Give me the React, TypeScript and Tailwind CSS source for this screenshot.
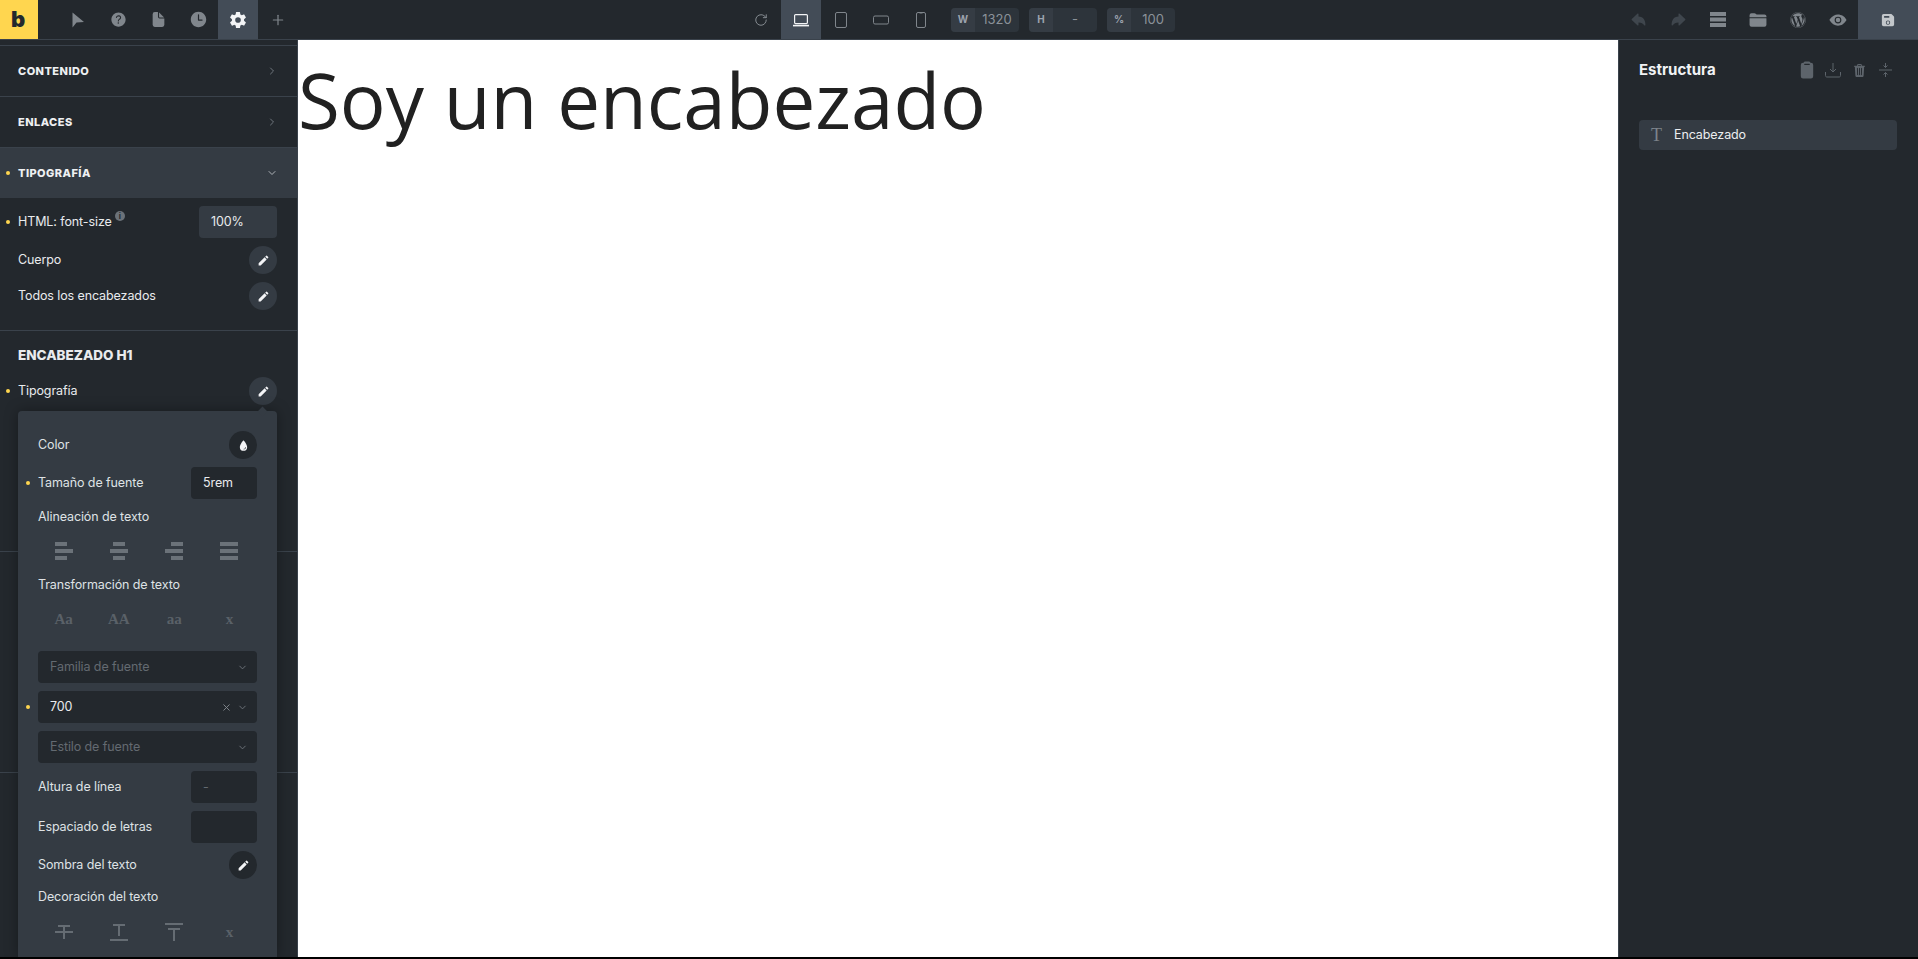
import { ReactNode } from 'react';
import { ChevronDown, ChevronRight, Plus, RotateCw, X } from 'lucide-react';
import {
  IoArrowRedo,
  IoArrowUndo,
  IoClipboard,
  IoDocument,
  IoEye,
  IoFolder,
  IoHelpCircle,
  IoSave,
  IoSettingsSharp,
  IoTime,
  IoTrash,
  IoWater,
} from 'react-icons/io5';
import { FaWordpress } from 'react-icons/fa';
import { MdEdit } from 'react-icons/md';

function Dot() {
  return <span className="absolute left-[6px] top-1/2 -mt-[2px] w-1 h-1 rounded-full bg-[#ffd64f]" />;
}

function ToolButton({ children, active, className }: { children: ReactNode; active?: boolean; className?: string }) {
  return (
    <div className={`w-10 h-full flex items-center justify-center ${active ? 'bg-[#434c57] text-[#f3f4f6]' : ''} ${className ?? ''}`}>
      {children}
    </div>
  );
}

function SizeField({ label, value }: { label: string; value: string }) {
  return (
    <div className="w-[68px] h-6 flex rounded-[4px] bg-[#2d343b] overflow-hidden text-[13px] text-[#8b9299]">
      <span className="w-6 flex items-center justify-center bg-[#353c44] text-[10px] font-bold text-[#9ca3af]">{label}</span>
      <span className="flex-1 flex items-center justify-center">{value}</span>
    </div>
  );
}

function TopBar() {
  return (
    <header className="h-10 shrink-0 flex items-stretch justify-between bg-[#23282d] border-b border-[#3a424b] text-[#80868c]">
      <div className="flex items-stretch">
        <div className="w-[38px] flex items-center justify-center bg-[#ffd64f] text-[#23282d] text-[22px] font-black leading-none pb-[2px] pr-[2px]">b</div>
        <div className="w-[20px]" />
        <ToolButton>
          <svg width="14" height="16" viewBox="0 0 14 16" fill="currentColor" className="ml-[-1px]">
            <path d="M1.5 0.5 L13 10 L5.5 10.5 L1.5 15.5 Z" />
          </svg>
        </ToolButton>
        <ToolButton><IoHelpCircle size={19} /></ToolButton>
        <ToolButton><IoDocument size={17} /></ToolButton>
        <ToolButton><IoTime size={19} /></ToolButton>
        <ToolButton active><IoSettingsSharp size={18} /></ToolButton>
        <ToolButton><Plus size={16} strokeWidth={1.8} /></ToolButton>
      </div>

      <div className="absolute left-[741px] top-0 h-[39px] flex items-stretch">
        <ToolButton className="text-[#8b9197]"><RotateCw size={14} strokeWidth={1.6} /></ToolButton>
        <ToolButton active>
          <svg width="18" height="14" viewBox="0 0 18 14" fill="none" stroke="currentColor" strokeWidth="1.2">
            <rect x="2.6" y="1.6" width="12.8" height="9" rx="1" />
            <path d="M1 12.6 H17" strokeWidth="1.6" />
          </svg>
        </ToolButton>
        <ToolButton>
          <svg width="12" height="16" viewBox="0 0 12 16" fill="none" stroke="currentColor" strokeWidth="1">
            <rect x="0.5" y="0.5" width="11" height="15" rx="1.5" />
          </svg>
        </ToolButton>
        <ToolButton>
          <svg width="16" height="10" viewBox="0 0 16 10" fill="none" stroke="currentColor" strokeWidth="1">
            <rect x="0.5" y="1" width="15" height="8" rx="1.5" />
          </svg>
        </ToolButton>
        <ToolButton>
          <svg width="10" height="16" viewBox="0 0 10 16" fill="none" stroke="currentColor" strokeWidth="1">
            <rect x="0.5" y="0.5" width="9" height="15" rx="1.5" />
            <path d="M3.5 1 H6.5" />
          </svg>
        </ToolButton>
        <div className="flex items-center gap-[10px] ml-[10px]">
          <SizeField label="W" value="1320" />
          <SizeField label="H" value="-" />
          <SizeField label="%" value="100" />
        </div>
      </div>

      <div className="flex items-stretch">
        <ToolButton className="text-[#3f464d]"><IoArrowUndo size={17} /></ToolButton>
        <ToolButton className="text-[#3f464d]"><IoArrowRedo size={17} /></ToolButton>
        <ToolButton>
          <svg width="16" height="15" viewBox="0 0 16 15" fill="currentColor">
            <rect width="16" height="4" />
            <rect y="5.5" width="16" height="4" />
            <rect y="11" width="16" height="4" />
          </svg>
        </ToolButton>
        <ToolButton><IoFolder size={18} /></ToolButton>
        <ToolButton><FaWordpress size={16} /></ToolButton>
        <ToolButton><IoEye size={18} /></ToolButton>
        <div className="w-[60px] flex items-center justify-center bg-[#434c57] text-[#c3c7cb]"><IoSave size={14} /></div>
      </div>
    </header>
  );
}

function AccordionRow({ label, open, marked }: { label: string; open?: boolean; marked?: boolean }) {
  return (
    <div className={`relative h-[51px] flex items-center justify-between pl-[18px] pr-[19px] border-t border-[#3a424b] ${open ? 'bg-[#343b43]' : ''}`}>
      {marked && <Dot />}
      <span className="text-[11px] font-extrabold tracking-[0.45px] text-[#eef0f2]">{label}</span>
      {open ? <ChevronDown size={12} className="text-[#aeb3b8]" /> : <ChevronRight size={12} className="text-[#6f767d]" />}
    </div>
  );
}

function EditButton({ dark }: { dark?: boolean }) {
  return (
    <span className={`w-7 h-7 rounded-full flex items-center justify-center text-[#f3f4f6] ${dark ? 'bg-[#23282d]' : 'bg-[#343b43]'}`}>
      <MdEdit size={13} />
    </span>
  );
}

function SideRow({ label, marked, children }: { label: ReactNode; marked?: boolean; children?: ReactNode }) {
  return (
    <div className="relative h-7 flex items-center justify-between pl-[18px] pr-[20px]">
      {marked && <Dot />}
      <span>{label}</span>
      {children}
    </div>
  );
}

function FieldBox({ children, className }: { children?: ReactNode; className?: string }) {
  return <span className={`h-8 rounded-[4px] flex items-center ${className ?? ''}`}>{children}</span>;
}

function SelectBox({ label, value, clearable }: { label?: string; value?: string; clearable?: boolean }) {
  return (
    <div className="h-8 rounded-[4px] bg-[#23282d] flex items-center pl-3 pr-[9px]">
      <span className={`flex-1 ${value ? 'text-[#e9ebed]' : 'text-[#636a71]'}`}>{value ?? label}</span>
      {clearable && <X size={11} className="text-[#858b91] mr-[5px]" />}
      <ChevronDown size={11} className="text-[#70767d]" />
    </div>
  );
}

function AlignIcon({ rows }: { rows: [number, number][] }) {
  return (
    <svg width="18" height="18" viewBox="0 0 18 18" fill="currentColor">
      {rows.map(([x, w], i) => (
        <rect key={i} x={x} y={i * 7} width={w} height="4" />
      ))}
    </svg>
  );
}

function TypographyPopover() {
  return (
    <div className="absolute left-[18px] top-[411px] w-[259px] h-[546px] z-10 rounded-t-[4px] bg-[#343b43] px-5 shadow-[0_0_14px_rgba(0,0,0,0.35)] text-[12.5px] tracking-[-0.1px] text-[#dfe2e5]">
      <span className="absolute right-[11px] -top-[3px] w-[7px] h-[7px] rotate-45 bg-[#343b43]" />

      <div className="h-7 mt-5 flex items-center justify-between">
        <span>Color</span>
        <span className="w-7 h-7 rounded-full bg-[#23282d] flex items-center justify-center text-[#f3f4f6]"><IoWater size={13} /></span>
      </div>

      <div className="relative h-8 mt-2 flex items-center justify-between">
        <span className="absolute -left-[12px] top-1/2 -mt-[2px] w-1 h-1 rounded-full bg-[#ffd64f]" />
        <span>Tamaño de fuente</span>
        <FieldBox className="w-[66px] bg-[#23282d] pl-3 text-[#e9ebed]">5rem</FieldBox>
      </div>

      <div className="h-5 mt-2 flex items-center">Alineación de texto</div>
      <div className="grid grid-cols-4 h-[18px] mt-[15px] -ml-[2px] justify-items-center text-[#6b7279]">
        <AlignIcon rows={[[0, 12], [0, 18], [0, 12]]} />
        <AlignIcon rows={[[3, 12], [0, 18], [3, 12]]} />
        <AlignIcon rows={[[6, 12], [0, 18], [6, 12]]} />
        <AlignIcon rows={[[0, 18], [0, 18], [0, 18]]} />
      </div>

      <div className="h-5 mt-[15px] flex items-center">Transformación de texto</div>
      <div className="grid grid-cols-4 h-6 mt-[12px] -ml-[2px] justify-items-center items-center font-['Liberation_Serif',serif] font-bold text-[#5a6168] text-[15px] tracking-normal">
        <span>Aa</span>
        <span>AA</span>
        <span>aa</span>
        <span>x</span>
      </div>

      <div className="flex flex-col gap-2 mt-[20px]">
        <SelectBox label="Familia de fuente" />
        <div className="relative">
          <span className="absolute -left-[12px] top-1/2 -mt-[2px] w-1 h-1 rounded-full bg-[#ffd64f]" />
          <SelectBox value="700" clearable />
        </div>
        <SelectBox label="Estilo de fuente" />
        <div className="flex items-center justify-between">
          <span>Altura de línea</span>
          <FieldBox className="w-[66px] bg-[#23282d] pl-3 text-[#636a71]">-</FieldBox>
        </div>
        <div className="flex items-center justify-between">
          <span>Espaciado de letras</span>
          <FieldBox className="w-[66px] bg-[#23282d]" />
        </div>
      </div>

      <div className="h-7 mt-2 flex items-center justify-between">
        <span>Sombra del texto</span>
        <EditButton dark />
      </div>

      <div className="h-5 mt-2 flex items-center">Decoración del texto</div>
      <div className="grid grid-cols-4 h-5 mt-[14px] -ml-[2px] justify-items-center items-center text-[#656c73]">
        <svg width="18" height="16" viewBox="0 0 18 16" fill="none" stroke="currentColor" strokeWidth="2">
          <path d="M3 2 H15 M0 8 H18 M9 2 V15" />
        </svg>
        <svg width="18" height="18" viewBox="0 0 18 18" fill="none" stroke="currentColor" strokeWidth="2">
          <path d="M3 2 H15 M9 2 V13 M0 17 H18" />
        </svg>
        <svg width="18" height="18" viewBox="0 0 18 18" fill="none" stroke="currentColor" strokeWidth="2">
          <path d="M0 1 H18 M3 6 H15 M9 6 V18" />
        </svg>
        <span className="font-['Liberation_Serif',serif] font-bold text-[15px] text-[#5a6168]">x</span>
      </div>
    </div>
  );
}

function LeftPanel() {
  return (
    <aside className="relative w-[298px] shrink-0 bg-[#23282d] border-r border-[#3a424b] pt-[5px] text-[12.5px] tracking-[-0.1px] text-[#e9ebed] overflow-hidden">
      <AccordionRow label="CONTENIDO" />
      <AccordionRow label="ENLACES" />
      <AccordionRow label="TIPOGRAFÍA" open marked />
      <div className="h-[132px] pt-2 flex flex-col gap-2">
        <div className="relative h-8 flex items-center justify-between pl-[18px] pr-[20px]">
          <Dot />
          <span className="flex items-start gap-[3px]">
            HTML: font-size
            <span className="mt-[-2px] w-[10px] h-[10px] rounded-full bg-[#6b7279] text-[8px] leading-[10px] text-center font-bold text-[#23282d]">i</span>
          </span>
          <FieldBox className="w-[78px] bg-[#343b43] pl-3">100%</FieldBox>
        </div>
        <SideRow label="Cuerpo"><EditButton /></SideRow>
        <SideRow label="Todos los encabezados"><EditButton /></SideRow>
      </div>
      <div className="h-[221px] border-t border-[#3a424b] pt-[14px]">
        <div className="pl-[18px] h-5 flex items-center text-[13.5px] font-extrabold tracking-normal text-[#e9ebed]">ENCABEZADO H1</div>
        <div className="mt-[12px]">
          <SideRow label="Tipografía" marked><EditButton /></SideRow>
        </div>
      </div>
      <div className="h-[221px] border-t border-[#3a424b]" />
      <div className="border-t border-[#3a424b]" />
    </aside>
  );
}

function StructurePanel() {
  return (
    <aside className="w-[300px] shrink-0 bg-[#23282d] border-l border-[#3a424b] pl-5 pr-[21px] pt-5 text-[12.5px] tracking-[-0.1px]">
      <div className="h-5 flex items-center justify-between">
        <span className="text-[15px] font-bold tracking-normal text-[#f1f3f5]">Estructura</span>
        <div className="flex items-center text-[#5d646b] -mr-[1px]">
          <span className="w-[26px] flex justify-center"><IoClipboard size={18} /></span>
          <span className="w-[26px] flex justify-center">
            <svg width="16" height="16" viewBox="0 0 16 16" fill="none" stroke="currentColor" strokeWidth="1">
              <path d="M8 1 V10 M5 7 L8 10 L11 7 M0.5 10 V13.5 C0.5 14.5 1 15 2 15 H14 C15 15 15.5 14.5 15.5 13.5 V10" />
            </svg>
          </span>
          <span className="w-[26px] flex justify-center"><IoTrash size={15} /></span>
          <span className="w-[26px] flex justify-center">
            <svg width="13" height="16" viewBox="0 0 13 16" fill="none" stroke="currentColor" strokeWidth="1">
              <path d="M0 8 H13 M6.5 1 V5.5 M4.5 3.5 L6.5 5.5 L8.5 3.5 M6.5 15 V10.5 M4.5 12.5 L6.5 10.5 L8.5 12.5" />
            </svg>
          </span>
        </div>
      </div>
      <div className="mt-[40px] h-[30px] rounded-[4px] bg-[#343b43] flex items-center pl-3 gap-[10px] text-[#eceef0]">
        <span className="w-[13px] font-['Liberation_Serif',serif] text-[18px] leading-none text-[#7d848b]">T</span>
        <span>Encabezado</span>
      </div>
    </aside>
  );
}

export default function App() {
  return (
    <div className="relative h-[959px] w-[1918px] overflow-hidden bg-black pb-[2px] font-['Inter','Liberation_Sans',sans-serif]">
      <div className="h-full flex flex-col">
        <TopBar />
        <div className="flex-1 min-h-0 flex">
          <LeftPanel />
          <main className="flex-1 bg-white">
            <h1 className="font-['Open_Sans',sans-serif] text-[76.3px] leading-[119px] text-[#212121]">Soy un encabezado</h1>
          </main>
          <StructurePanel />
        </div>
      </div>
      <TypographyPopover />
    </div>
  );
}
